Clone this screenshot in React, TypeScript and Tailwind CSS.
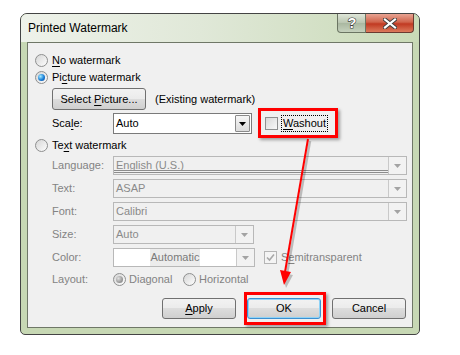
import React from 'react';

const FONT = "font-['Liberation_Sans',Arial,sans-serif]";

function Radio({ checked, disabled }: { checked?: boolean; disabled?: boolean }) {
  return (
    <span className="flex h-[13px] w-[13px] shrink-0 items-center justify-center rounded-full border border-[#8e8f8f] bg-[linear-gradient(135deg,#d6d6d6,#fdfdfd)]">
      {checked && (
        <span
          className={
            disabled
              ? 'h-[7px] w-[7px] rounded-full bg-[radial-gradient(circle_at_35%_35%,#e0e0e0,#9a9a9a_60%,#7a7a7a)]'
              : 'h-[7px] w-[7px] rounded-full bg-[radial-gradient(circle_at_35%_35%,#a6ecff,#1a7fd8_55%,#0b3f8c)]'
          }
        />
      )}
    </span>
  );
}

function Check({ checked, disabled }: { checked?: boolean; disabled?: boolean }) {
  return (
    <span
      className={`flex h-[13px] w-[13px] shrink-0 items-center justify-center border ${
        disabled ? 'border-[#b5b5b5] bg-[#f4f4f4]' : 'border-[#8e8f8f] bg-[linear-gradient(135deg,#d8d8d8,#f9f9f9)]'
      }`}
    >
      {checked && (
        <svg width="9" height="9" viewBox="0 0 9 9">
          <path d="M1 4.5 L3.5 7 L8 1.5" fill="none" stroke="#a8a8a8" strokeWidth="1.6" />
        </svg>
      )}
    </span>
  );
}

function DropBtn({ disabled }: { disabled?: boolean }) {
  if (disabled) {
    return (
      <div className="flex h-full w-[18px] items-center justify-center border-l border-[#c9c9c9] bg-[#f2f2f2]">
        <svg width="7" height="4" viewBox="0 0 7 4">
          <path d="M0 0 H7 L3.5 4 Z" fill="#a3a3a3" />
        </svg>
      </div>
    );
  }
  return (
    <div className="my-[1px] mr-[1px] flex w-[15px] items-center justify-center rounded-[1px] border border-[#8a8a8a] bg-[linear-gradient(#f6f6f6,#dcdcdc)]">
      <svg width="7" height="4" viewBox="0 0 7 4">
        <path d="M0 0 H7 L3.5 4 Z" fill="#000" />
      </svg>
    </div>
  );
}

function Button({ children, primary }: { children: React.ReactNode; primary?: boolean }) {
  return (
    <div
      className={`flex h-[21px] w-[74px] items-center justify-center rounded-[3px] border text-[11px] text-black bg-[linear-gradient(#f2f2f2_0%,#ebebeb_50%,#dddddd_50%,#cfcfcf_100%)] ${
        primary ? 'border-[#3c8fd0] shadow-[inset_0_0_0_1px_#8fd3f7]' : 'border-[#707070]'
      }`}
    >
      <span>{children}</span>
    </div>
  );
}

function U({ children }: { children: React.ReactNode }) {
  return <span className="underline underline-offset-2">{children}</span>;
}

function DisabledCombo({ value, width, double }: { value: string; width: string; double?: boolean }) {
  return (
    <div className={`relative flex h-[19px] ${width} border border-[#b8b8b8] bg-[#f0f0f0]`}>
      <div className="flex flex-1 items-center pl-[2px] text-[#8a8a8a]">{value}</div>
      {double && (
        <div className="absolute bottom-[1px] left-0 right-[18px] h-[3px] border-y border-[#8c8c8c]" />
      )}
      <DropBtn disabled />
    </div>
  );
}

export default function App() {
  return (
    <div className={`relative h-[355px] w-[460px] overflow-hidden bg-white text-[11px] ${FONT}`}>
      <div className="ml-[20px] mt-[13px] flex h-[322px] w-[400px] flex-col rounded-t-[7px] rounded-b-[5px] border border-[#444] bg-[#c7d8b4]">
        {/* title bar */}
        <div className="flex h-[28px] shrink-0 justify-between rounded-t-[6px] bg-[linear-gradient(90deg,#eef2ea_0%,#e0e8d8_45%,#c9dab7_100%)]">
          <div className="flex items-center pl-[7px] text-[12px] text-black">Printed Watermark</div>
          <div className="mr-[5px] flex h-[19px]">
            <div className="flex w-[29px] items-center justify-center rounded-bl-[4px] border border-t-0 border-[#6b7563] bg-[linear-gradient(#dfe6d9,#b9c5b0_50%,#a9b7a0_50%,#c5d1bd)]">
              <svg width="12" height="14" viewBox="0 0 12 14">
                <text
                  x="6"
                  y="12"
                  textAnchor="middle"
                  fontSize="14"
                  fontWeight="bold"
                  fontFamily="Liberation Sans, Arial, sans-serif"
                  fill="#fff"
                  stroke="#3d3d3d"
                  strokeWidth="1.2"
                  paintOrder="stroke"
                >
                  ?
                </text>
              </svg>
            </div>
            <div className="flex w-[48px] items-center justify-center rounded-br-[4px] border border-l-0 border-t-0 border-[#6b3a30] bg-[linear-gradient(#e8a493,#d0644c_45%,#c13a22_55%,#dc7a5c)]">
              <svg width="14" height="11" viewBox="0 0 14 11">
                <path d="M2 1.5 L12 9.5 M12 1.5 L2 9.5" stroke="#3d3d3d" strokeWidth="4" strokeLinecap="square" />
                <path d="M2 1.5 L12 9.5 M12 1.5 L2 9.5" stroke="#fff" strokeWidth="2.2" strokeLinecap="square" />
              </svg>
            </div>
          </div>
        </div>

        {/* frame + client area */}
        <div className="flex flex-1 px-[6px] pb-[6px]">
          <div className="flex flex-1 flex-col border border-[#6f7767] bg-[#f0f0f0] text-black">
            <div className="mt-[9px] flex h-[17px] items-center gap-[2px] pl-[7px]">
              <Radio />
              <span className="ml-[2px]">
                <U>N</U>o watermark
              </span>
            </div>
            <div className="flex h-[17px] items-center gap-[2px] pl-[7px]">
              <Radio checked />
              <span className="ml-[2px]">
                Pi<U>c</U>ture watermark
              </span>
            </div>
            <div className="mt-[2px] flex h-[22px] items-center pl-[24px]">
              <div className="flex h-[22px] w-[94px] items-center justify-center rounded-[3px] border border-[#707070] bg-[linear-gradient(#f2f2f2_0%,#ebebeb_50%,#dddddd_50%,#cfcfcf_100%)]">
                <span>
                  Select <U>P</U>icture...
                </span>
              </div>
              <span className="ml-[9px]">(Existing watermark)</span>
            </div>
            <div className="mt-[3px] flex h-[21px] items-center pl-[24px]">
              <span className="w-[61px]">
                Sca<U>l</U>e:
              </span>
              <div className="flex h-[21px] w-[139px] border border-[#7a7a7a] bg-white">
                <div className="flex flex-1 items-center pl-[2px]">Auto</div>
                <DropBtn />
              </div>
              <div className="ml-[13px] flex items-center">
                <Check />
                <span className="ml-[3px] border border-dotted border-black px-[1px] py-[2px] leading-none">
                  <U>W</U>ashout
                </span>
              </div>
            </div>
            <div className="mt-[3px] flex h-[17px] items-center gap-[2px] pl-[7px]">
              <Radio />
              <span className="ml-[2px]">
                Te<U>x</U>t watermark
              </span>
            </div>

            <div className="mt-[2px] flex h-[19px] items-center pl-[24px]">
              <span className="w-[61px] text-[#838383]">Language:</span>
              <DisabledCombo value="English (U.S.)" width="w-[294px]" double />
            </div>
            <div className="mt-[4px] flex h-[19px] items-center pl-[24px]">
              <span className="w-[61px] text-[#838383]">Text:</span>
              <DisabledCombo value="ASAP" width="w-[294px]" />
            </div>
            <div className="mt-[4px] flex h-[19px] items-center pl-[24px]">
              <span className="w-[61px] text-[#838383]">Font:</span>
              <DisabledCombo value="Calibri" width="w-[294px]" />
            </div>
            <div className="mt-[4px] flex h-[19px] items-center pl-[24px]">
              <span className="w-[61px] text-[#838383]">Size:</span>
              <DisabledCombo value="Auto" width="w-[141px]" />
            </div>
            <div className="mt-[4px] flex h-[19px] items-center pl-[24px]">
              <span className="w-[61px] text-[#838383]">Color:</span>
              <div className="flex h-[19px] w-[142px] border border-[#b8b8b8] bg-white">
                <div className="flex flex-1 items-center justify-center">
                  <span className="bg-[#ececec] px-[1px] text-[#7a7a7a]">Automatic</span>
                </div>
                <DropBtn disabled />
              </div>
              <div className="ml-[9px] flex items-center">
                <Check checked disabled />
                <span className="ml-[4px] text-[#838383]">
                  S<U>e</U>mitransparent
                </span>
              </div>
            </div>
            <div className="mt-[4px] flex h-[17px] items-center pl-[24px]">
              <span className="w-[61px] text-[#838383]">Layout:</span>
              <Radio checked disabled />
              <span className="ml-[3px] w-[54px] text-[#838383]">Diagonal</span>
              <Radio />
              <span className="ml-[3px] text-[#838383]">Horizontal</span>
            </div>

            <div className="mt-[10px] flex justify-end gap-[11px] pr-[6px]">
              <Button>
                <U>A</U>pply
              </Button>
              <Button primary>OK</Button>
              <Button>Cancel</Button>
            </div>
          </div>
        </div>
      </div>

      {/* annotation overlays */}
      <div className="pointer-events-none absolute left-[258px] top-[108px] h-[30px] w-[80px] border-[3px] border-[#ff0000] shadow-[2px_2px_3px_rgba(0,0,0,0.35)]" />
      <div className="pointer-events-none absolute left-[244px] top-[292px] h-[33px] w-[82px] border-[3px] border-[#ff0000] shadow-[2px_2px_3px_rgba(0,0,0,0.35)]" />
      <svg className="pointer-events-none absolute left-0 top-0" width="460" height="355" viewBox="0 0 460 355">
        <path d="M310 141 L287 274" stroke="rgba(0,0,0,0.22)" strokeWidth="2.5" />
        <polygon points="282,273 293,275 286,288" fill="rgba(0,0,0,0.22)" />
        <path d="M308 139 L285 272" stroke="#ff0000" strokeWidth="2" />
        <polygon points="280,270 291,272 284,285" fill="#ff0000" />
      </svg>
    </div>
  );
}
